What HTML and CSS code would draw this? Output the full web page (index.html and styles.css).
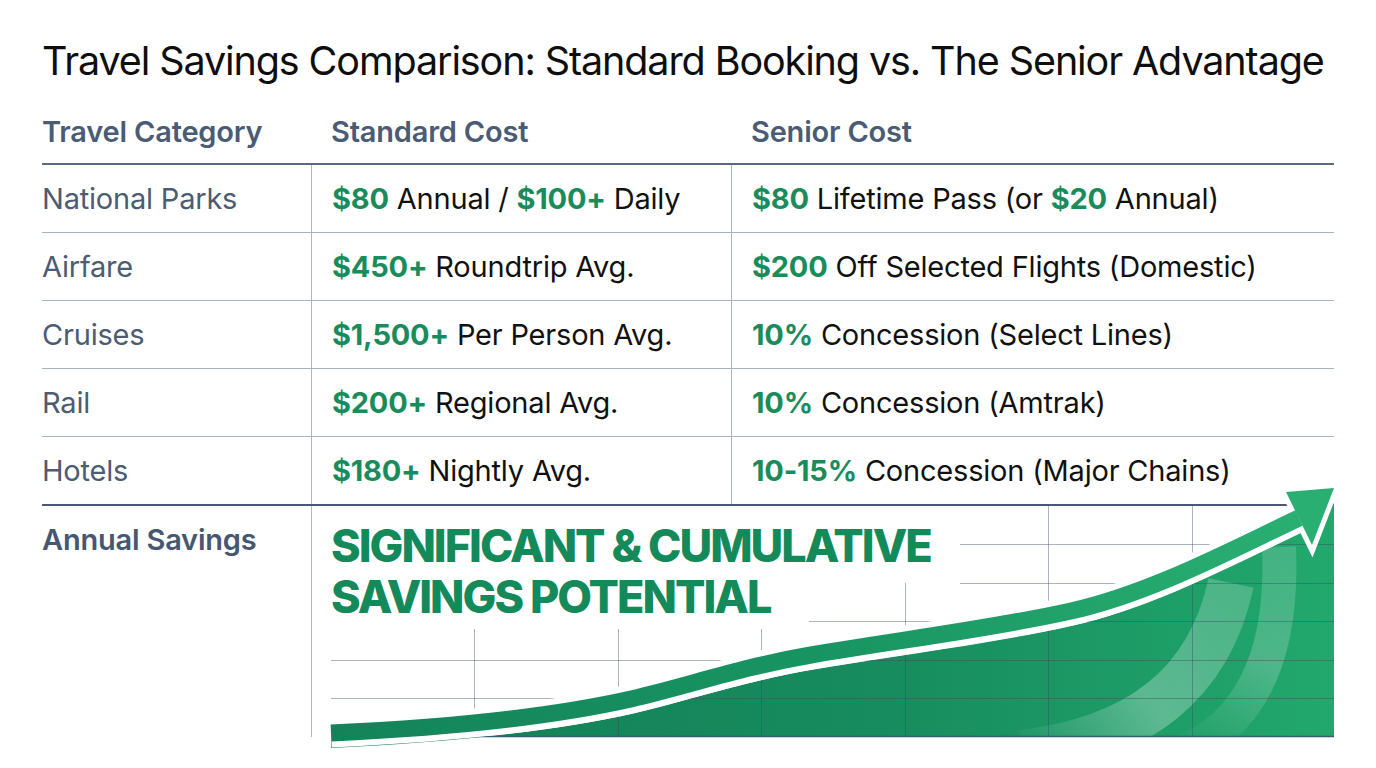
FILE: index.html
```html
<!DOCTYPE html>
<html lang="en">
<head>
<meta charset="utf-8">
<title>Travel Savings Comparison</title>
<link rel="stylesheet" href="styles.css">
</head>
<body>
<main class="page">
  <h1 class="title">Travel Savings Comparison: Standard Booking vs. The Senior Advantage</h1>
  <div class="table">
    <div class="row head">
      <div class="cell c1"><span>Travel Category</span></div>
      <div class="cell c2"><span>Standard Cost</span></div>
      <div class="cell c3"><span>Senior Cost</span></div>
    </div>
    <div class="row">
      <div class="cell c1 cat"><span>National Parks</span></div>
      <div class="cell c2 val"><span><b class="g">$80</b> Annual / <b class="g">$100+</b> Daily</span></div>
      <div class="cell c3 val"><span><b class="g">$80</b> Lifetime Pass (or <b class="g">$20</b> Annual)</span></div>
    </div>
    <div class="row">
      <div class="cell c1 cat"><span>Airfare</span></div>
      <div class="cell c2 val"><span><b class="g">$450+</b> Roundtrip Avg.</span></div>
      <div class="cell c3 val"><span><b class="g">$200</b> Off Selected Flights (Domestic)</span></div>
    </div>
    <div class="row">
      <div class="cell c1 cat"><span>Cruises</span></div>
      <div class="cell c2 val"><span><b class="g">$1,500+</b> Per Person Avg.</span></div>
      <div class="cell c3 val"><span><b class="g">10%</b> Concession (Select Lines)</span></div>
    </div>
    <div class="row">
      <div class="cell c1 cat"><span>Rail</span></div>
      <div class="cell c2 val"><span><b class="g">$200+</b> Regional Avg.</span></div>
      <div class="cell c3 val"><span><b class="g">10%</b> Concession (Amtrak)</span></div>
    </div>
    <div class="row last">
      <div class="cell c1 cat"><span>Hotels</span></div>
      <div class="cell c2 val"><span><b class="g">$180+</b> Nightly Avg.</span></div>
      <div class="cell c3 val"><span><b class="g">10-15%</b> Concession (Major Chains)</span></div>
    </div>
    <div class="row total">
      <div class="cell c1 total-label"><span>Annual Savings</span></div>
      <div class="cell chart-cell">
        <svg class="chart" width="1003" height="232" viewBox="0 0 1003 232" aria-hidden="true">
          <defs>
            <linearGradient id="fillG" gradientUnits="userSpaceOnUse" x1="0" y1="0" x2="1003" y2="0">
              <stop offset="0" stop-color="#137e58"/>
              <stop offset="0.55" stop-color="#178c5e"/>
              <stop offset="1" stop-color="#22a86d"/>
            </linearGradient>
            <linearGradient id="bandG" gradientUnits="userSpaceOnUse" x1="0" y1="0" x2="1003" y2="0">
              <stop offset="0" stop-color="#14835a"/>
              <stop offset="0.5" stop-color="#189562"/>
              <stop offset="1" stop-color="#2bb174"/>
            </linearGradient>
            <linearGradient id="swA" gradientUnits="userSpaceOnUse" x1="680" y1="240" x2="900" y2="80">
              <stop offset="0" stop-color="#ffffff" stop-opacity="0"/>
              <stop offset="0.5" stop-color="#ffffff" stop-opacity="0.28"/>
              <stop offset="1" stop-color="#ffffff" stop-opacity="0.2"/>
            </linearGradient>
            <linearGradient id="swB" gradientUnits="userSpaceOnUse" x1="850" y1="240" x2="945" y2="45">
              <stop offset="0" stop-color="#ffffff" stop-opacity="0"/>
              <stop offset="0.5" stop-color="#ffffff" stop-opacity="0.2"/>
              <stop offset="1" stop-color="#ffffff" stop-opacity="0.16"/>
            </linearGradient>
            <clipPath id="fillClip">
              <path d="M0 243 C110 238 220 227 300 209 C360 195 410 177 480 165 C560 151 660 139 740 121 C820 103 900 60 968 28 L1003 -2 L1003 232 L0 232 Z"/>
            </clipPath>
          </defs>
          <path d="M0 243 C110 238 220 227 300 209 C360 195 410 177 480 165 C560 151 660 139 740 121 C820 103 900 60 968 28 L1003 -2 L1003 232 L0 232 Z" fill="url(#fillG)"/>
          <g clip-path="url(#fillClip)" fill="none">
            <path d="M690 248 Q868 228 900 78" stroke="url(#swA)" stroke-width="46"/>
            <path d="M850 248 Q955 205 948 42" stroke="url(#swB)" stroke-width="34"/>
          </g>
          <g class="grid" stroke="#3b4868" stroke-opacity="0.42" stroke-width="1">
            <line x1="143.5" y1="124" x2="143.5" y2="232"/>
            <line x1="287.5" y1="124" x2="287.5" y2="232"/>
            <line x1="430.5" y1="124" x2="430.5" y2="232"/>
            <line x1="574.5" y1="78" x2="574.5" y2="232"/>
            <line x1="717.5" y1="0" x2="717.5" y2="232"/>
            <line x1="861.5" y1="0" x2="861.5" y2="232"/>
            <line x1="629" y1="39.5" x2="1003" y2="39.5"/>
            <line x1="629" y1="78.5" x2="1003" y2="78.5"/>
            <line x1="478" y1="116.5" x2="1003" y2="116.5"/>
            <line x1="0" y1="155.5" x2="1003" y2="155.5"/>
            <line x1="0" y1="193.5" x2="1003" y2="193.5"/>
          </g>
          <line x1="0" y1="231.5" x2="1003" y2="231.5" stroke="#2c5f66" stroke-width="1.5"/>
          <path d="M0 228 C110 223 220 212 300 194 C360 180 410 162 480 150 C560 136 660 124 740 106 C820 88 900 45 968 13" fill="none" stroke="#ffffff" stroke-width="29"/>
          <polygon points="1003,-17 955,-13 981,40" fill="#ffffff" stroke="#ffffff" stroke-width="10" stroke-linejoin="miter"/>
          <path d="M0 228 C110 223 220 212 300 194 C360 180 410 162 480 150 C560 136 660 124 740 106 C820 88 900 45 968 13" fill="none" stroke="url(#bandG)" stroke-width="17"/>
          <polygon points="1003,-17 955,-13 981,40" fill="#2aaf73"/>
        </svg>
        <p class="headline">SIGNIFICANT &amp; CUMULATIVE<br>SAVINGS POTENTIAL</p>
      </div>
    </div>
  </div>
</main>
</body>
</html>
```

FILE: styles.css
```css
* {
  box-sizing: border-box;
}

html, body {
  margin: 0;
  padding: 0;
  background: #ffffff;
}

body {
  font-family: Inter, "Liberation Sans", Arial, sans-serif;
  color: #111111;
}

.page {
  width: 1376px;
  height: 768px;
  padding: 0 42px;
  overflow: hidden;
}

.title {
  margin: 0;
  padding-top: 38px;
  height: 100px;
  line-height: 46px;
  font-size: 39.5px;
  font-weight: 400;
  letter-spacing: -1.1px;
  color: #0e0e0e;
  white-space: nowrap;
}

.table {
  width: 1292px;
}

.row {
  display: grid;
  grid-template-columns: 269px 420px 603px;
  height: 68px;
  border-bottom: 1px solid #a9b2c0;
}

.row.head {
  height: 65px;
  border-bottom: 2px solid #5b6a7e;
}

.row.last {
  height: 69px;
  border-bottom: 2px solid #4a5874;
}

.row.total {
  height: 231px;
  border-bottom: 0;
  grid-template-columns: 269px 1023px;
}

.cell {
  display: flex;
  align-items: center;
  font-size: 29px;
  line-height: 34px;
  letter-spacing: -0.2px;
  white-space: nowrap;
}

.c2, .c3 {
  padding-left: 20px;
}

.row:not(.head) .c2,
.row:not(.head) .c3 {
  border-left: 1px solid #aeb7c4;
}

.head .cell {
  font-weight: 600;
  color: #4a5c75;
}

.cat {
  color: #4b5c73;
  font-weight: 400;
}

.val {
  color: #111111;
}

.g {
  color: #1a8c5c;
  font-weight: 700;
}

.total-label {
  align-items: flex-start;
  padding-top: 17px;
  font-weight: 600;
  color: #465871;
}

.chart-cell {
  position: relative;
  display: block;
  border-left: 1px solid #aeb7c4;
  padding-left: 19px;
  padding-top: 14px;
}

.chart {
  position: absolute;
  left: 19px;
  top: -1px;
  overflow: visible;
}

.headline {
  position: relative;
  z-index: 1;
  margin: 0;
  font-size: 45px;
  line-height: 51px;
  font-weight: 800;
  letter-spacing: -2px;
  color: #148a5a;
}
```
